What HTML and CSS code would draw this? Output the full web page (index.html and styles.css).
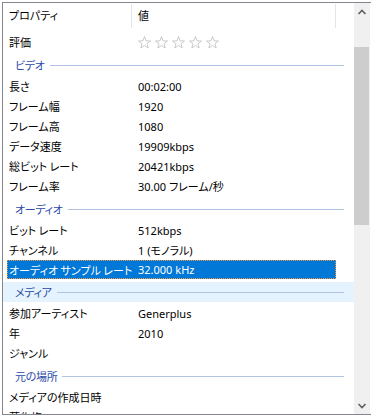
FILE: index.html
```html
<!DOCTYPE html>
<html lang="ja">
<head>
    <meta charset="UTF-8">
    <meta name="viewport" content="width=device-width, initial-scale=1.0">
    <title>詳細</title>
    <link rel="stylesheet" href="styles.css">
</head>
<body>

    <div class="pane">
        <div class="list">

            <!-- Column header -->
            <div class="header">
                <div class="col col-name">プロパティ</div>
                <div class="col col-value">値</div>
                <div class="col col-rest"></div>
            </div>

            <div class="rows">
                <div class="row">
                    <span class="name">評価</span>
                    <span class="value stars">
                        <svg class="star" viewBox="0 0 13 13"><polygon points="6.5,0.5 8,4.8 12.5,5 9,7.7 10.2,12 6.5,9.5 2.8,12 4,7.7 0.5,5 5,4.8"/></svg>
                        <svg class="star" viewBox="0 0 13 13"><polygon points="6.5,0.5 8,4.8 12.5,5 9,7.7 10.2,12 6.5,9.5 2.8,12 4,7.7 0.5,5 5,4.8"/></svg>
                        <svg class="star" viewBox="0 0 13 13"><polygon points="6.5,0.5 8,4.8 12.5,5 9,7.7 10.2,12 6.5,9.5 2.8,12 4,7.7 0.5,5 5,4.8"/></svg>
                        <svg class="star" viewBox="0 0 13 13"><polygon points="6.5,0.5 8,4.8 12.5,5 9,7.7 10.2,12 6.5,9.5 2.8,12 4,7.7 0.5,5 5,4.8"/></svg>
                        <svg class="star" viewBox="0 0 13 13"><polygon points="6.5,0.5 8,4.8 12.5,5 9,7.7 10.2,12 6.5,9.5 2.8,12 4,7.7 0.5,5 5,4.8"/></svg>
                    </span>
                </div>

                <!-- Video -->
                <div class="group"><span>ビデオ</span></div>
                <div class="row"><span class="name">長さ</span><span class="value">00:02:00</span></div>
                <div class="row"><span class="name">フレーム幅</span><span class="value">1920</span></div>
                <div class="row"><span class="name">フレーム高</span><span class="value">1080</span></div>
                <div class="row"><span class="name">データ速度</span><span class="value">19909kbps</span></div>
                <div class="row"><span class="name">総ビット レート</span><span class="value">20421kbps</span></div>
                <div class="row"><span class="name">フレーム率</span><span class="value">30.00 フレーム/秒</span></div>

                <!-- Audio -->
                <div class="group"><span>オーディオ</span></div>
                <div class="row"><span class="name">ビット レート</span><span class="value">512kbps</span></div>
                <div class="row"><span class="name">チャンネル</span><span class="value">1 (モノラル)</span></div>
                <div class="row selected"><span class="name">オーディオ サンプル レート</span><span class="value">32.000 kHz</span></div>

                <!-- Media -->
                <div class="group hover"><span>メディア</span></div>
                <div class="row"><span class="name">参加アーティスト</span><span class="value">Generplus</span></div>
                <div class="row"><span class="name">年</span><span class="value">2010</span></div>
                <div class="row"><span class="name">ジャンル</span><span class="value"></span></div>

                <!-- Origin -->
                <div class="group"><span>元の場所</span></div>
                <div class="row"><span class="name">メディアの作成日時</span><span class="value"></span></div>
                <div class="row"><span class="name">著作権</span><span class="value"></span></div>
            </div>
        </div>

        <!-- Scrollbar -->
        <div class="scrollbar">
            <div class="arrow">
                <svg viewBox="0 0 16 17" width="16" height="17"><polyline points="4.5,11 8,7.5 11.5,11"/></svg>
            </div>
            <div class="track"><div class="thumb"></div></div>
            <div class="arrow">
                <svg viewBox="0 0 16 17" width="16" height="17"><polyline points="4.5,7 8,10.5 11.5,7"/></svg>
            </div>
        </div>
    </div>

</body>
</html>
```

FILE: styles.css
```css
body {
    margin: 0;
    padding: 0;
    background-color: #ffffff;
    font-family: "Noto Sans CJK JP", sans-serif;
    font-size: 11px;
    font-feature-settings: "palt";
    color: #000000;
    overflow: hidden;
}

/* Outer frame */
.pane {
    box-sizing: border-box;
    margin: 2px 0 0 2px;
    width: 369px;
    height: 413px;
    border: 1px solid #828790;
    border-right: none;
    display: flex;
}

.list {
    width: 351px;
    display: flex;
    flex-direction: column;
    overflow: hidden;
}

/* Column header */
.header {
    height: 25px;
    display: flex;
    flex-shrink: 0;
}

.col {
    box-sizing: border-box;
    height: 24px;
    margin-top: 1px;
    padding-left: 6px;
    line-height: 22px;
    border-right: 1px solid #e5e5e5;
}

.col-name {
    width: 129px;
}

.col-value {
    width: 204px;
}

.col-rest {
    flex: 1;
    border-right: none;
}

/* Rows */
.rows {
    padding-top: 4px;
    overflow: hidden;
}

.row {
    box-sizing: border-box;
    height: 20px;
    width: 329px;
    margin-left: 4px;
    display: flex;
    align-items: center;
    white-space: nowrap;
}

.name {
    width: 131px;
    padding-left: 2px;
    box-sizing: border-box;
}

.value {
    font-family: "Noto Sans", "Noto Sans CJK JP", sans-serif;
}

.row.selected {
    background-color: #0078d7;
    color: #ffffff;
    outline: 1px dotted #f39a3c;
    outline-offset: -1px;
    height: 19px;
    margin-bottom: 1px;
}

/* Rating stars */
.stars {
    display: flex;
    gap: 4px;
}

.star {
    width: 13px;
    height: 13px;
}

.star polygon {
    fill: none;
    stroke: #c4c4c4;
    stroke-width: 0.9;
    stroke-linejoin: round;
}

/* Group headings */
.group {
    box-sizing: border-box;
    height: 20px;
    margin: 3px 0 1px;
    padding: 0 10px 0 12px;
    display: flex;
    align-items: center;
    color: #2a4aa8;
    letter-spacing: -0.3px;
}

.group::after {
    content: "";
    flex: 1;
    height: 1px;
    margin-left: 5px;
    background-color: #b3c3e5;
}

.group.hover {
    background-color: #e5f3ff;
}

/* Scrollbar */
.scrollbar {
    width: 16px;
    margin-right: 1px;
    background-color: #f0f0f0;
    display: flex;
    flex-direction: column;
}

.arrow {
    height: 17px;
    flex-shrink: 0;
}

.arrow polyline {
    fill: none;
    stroke: #606060;
    stroke-width: 1.6;
}

.track {
    flex: 1;
}

.thumb {
    margin: 27px 1px 0 0;
    height: 178px;
    background-color: #cdcdcd;
}
```
